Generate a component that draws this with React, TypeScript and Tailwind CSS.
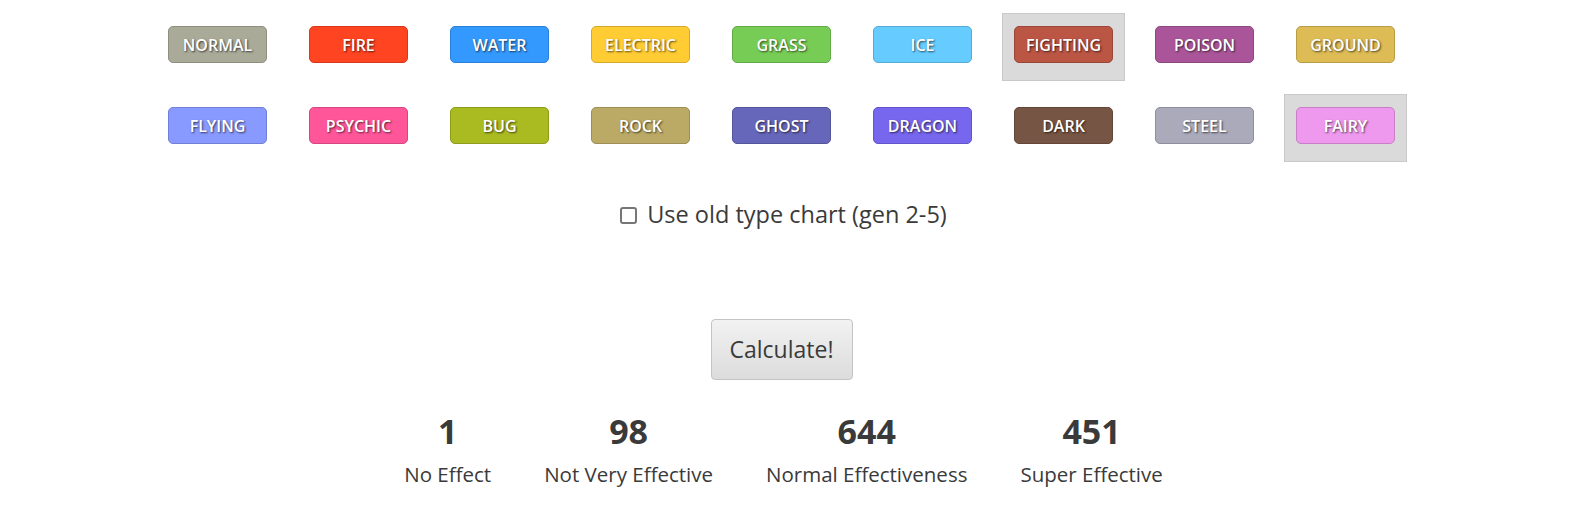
import React from "react";

type T = { name: string; bg: string; border: string; sel?: boolean };

const row1: T[] = [
  { name: "NORMAL", bg: "bg-[#aaaa99]", border: "border-[#8f8f7f]" },
  { name: "FIRE", bg: "bg-[#ff4422]", border: "border-[#d9381b]" },
  { name: "WATER", bg: "bg-[#3399ff]", border: "border-[#2a80d6]" },
  { name: "ELECTRIC", bg: "bg-[#ffcc33]", border: "border-[#d6ab2a]" },
  { name: "GRASS", bg: "bg-[#77cc55]", border: "border-[#62ab46]" },
  { name: "ICE", bg: "bg-[#66ccff]", border: "border-[#55abd6]" },
  { name: "FIGHTING", bg: "bg-[#bb5544]", border: "border-[#9c4638]", sel: true },
  { name: "POISON", bg: "bg-[#aa5599]", border: "border-[#8e4680]" },
  { name: "GROUND", bg: "bg-[#ddbb55]", border: "border-[#b99c46]" },
];
const row2: T[] = [
  { name: "FLYING", bg: "bg-[#8899ff]", border: "border-[#7180d6]" },
  { name: "PSYCHIC", bg: "bg-[#ff5599]", border: "border-[#d64680]" },
  { name: "BUG", bg: "bg-[#aabb22]", border: "border-[#8e9c1b]" },
  { name: "ROCK", bg: "bg-[#bbaa66]", border: "border-[#9c8e55]" },
  { name: "GHOST", bg: "bg-[#6666bb]", border: "border-[#55559c]" },
  { name: "DRAGON", bg: "bg-[#7766ee]", border: "border-[#6355c7]" },
  { name: "DARK", bg: "bg-[#775544]", border: "border-[#634638]" },
  { name: "STEEL", bg: "bg-[#aaaabb]", border: "border-[#8e8e9c]" },
  { name: "FAIRY", bg: "bg-[#ee99ee]", border: "border-[#c780c7]", sel: true },
];

function Cell({ t }: { t: T }) {
  return (
    <div
      className={`w-[123px] h-[68px] flex justify-center pt-[12px] box-border ${
        t.sel ? "bg-[#dadada] border border-[#c9c9c9]" : "border border-transparent"
      }`}
    >
      <div
        className={`w-[99px] h-[37px] rounded-[5px] border ${t.bg} ${t.border} flex items-center justify-center text-white text-[16px] font-semibold [text-shadow:1px_1px_2px_rgba(0,0,0,0.65)]`}
      >
        {t.name}
      </div>
    </div>
  );
}

const stats = [
  { n: "1", l: "No Effect" },
  { n: "98", l: "Not Very Effective" },
  { n: "644", l: "Normal Effectiveness" },
  { n: "451", l: "Super Effective" },
];

export default function App() {
  return (
    <div className="w-[1579px] h-[516px] bg-white overflow-hidden">
      <div className="w-[1563px] text-[#3a3a3a] font-['Open_Sans',sans-serif]">
        <div className="flex justify-center gap-[18px] pt-[13px]">
          {row1.map((t) => (
            <Cell key={t.name} t={t} />
          ))}
        </div>
        <div className="flex justify-center gap-[18px] mt-[13px]">
          {row2.map((t) => (
            <Cell key={t.name} t={t} />
          ))}
        </div>
        <div className="flex justify-center items-center mt-[38px] h-[30px] text-[23.5px]">
          <span className="w-[17px] h-[17px] border-2 border-[#767676] rounded-[3px] bg-white mr-[10px] box-border ml-[4px]" />
          <span>Use old type chart (gen 2-5)</span>
        </div>
        <div className="flex justify-center mt-[89px]">
          <button className="w-[142px] h-[61px] rounded-[4px] border border-[#c4c4c4] bg-gradient-to-b from-[#f2f2f2] to-[#dcdcdc] text-[23px] text-[#3a3a3a]">
            Calculate!
          </button>
        </div>
        <div className="flex justify-center mt-[29px] pl-[4px]">
          {stats.map((s) => (
            <div key={s.l} className="flex flex-col items-center mx-[26.5px]">
              <div className="text-[34px] font-bold leading-[44px]">{s.n}</div>
              <div className="text-[20.5px] leading-[28px] mt-[7px]">{s.l}</div>
            </div>
          ))}
        </div>
      </div>
    </div>
  );
}
